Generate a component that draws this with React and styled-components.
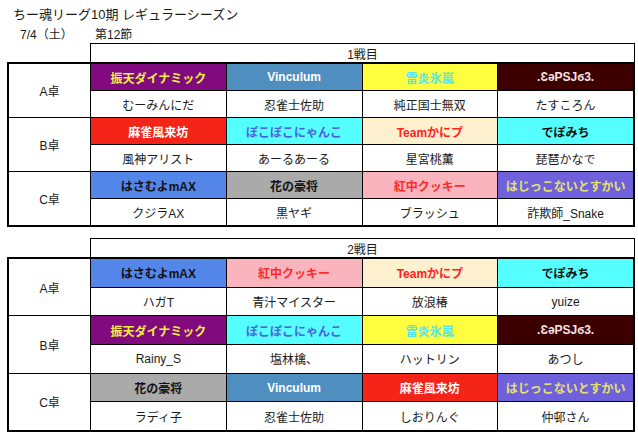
import React from "react";
import styled, { createGlobalStyle } from "styled-components";

const Global = createGlobalStyle`
  html, body { margin: 0; padding: 0; background: #fff; }
  body { font-family: "Liberation Sans", "Noto Sans CJK JP", sans-serif; color: #1a1a1a; }
`;

const Page = styled.div`
  width: 638px;
  height: 440px;
  box-sizing: border-box;
  padding: 6px 3px 0 7px;
  display: flex;
  flex-direction: column;
`;

const Title = styled.div`
  font-size: 13px;
  line-height: 18px;
  padding-left: 6px;
  white-space: nowrap;
`;

const SubRow = styled.div`
  display: flex;
  font-size: 12px;
  line-height: 16px;
  margin-top: 3px;
  padding-left: 13px;
`;

const DateText = styled.span`
  width: 75px;
  white-space: nowrap;
`;

const RoundTable = styled.div`
  display: flex;
  flex-direction: column;
  margin-top: ${(p) => p.$gap}px;
`;

const RoundHeader = styled.div`
  margin-left: 83px;
  height: ${(p) => p.$h}px;
  border: 1px solid #000;
  border-bottom: none;
  display: flex;
  align-items: center;
  justify-content: center;
  font-size: 12px;
`;

const Grid = styled.div`
  display: grid;
  grid-template-columns: 81px repeat(4, 1fr);
  grid-auto-rows: ${(p) => p.$rowH}px;
  gap: 1px;
  background: #000;
  border: 2px solid #000;
`;

const Cell = styled.div`
  display: flex;
  align-items: center;
  justify-content: center;
  background: ${(p) => p.$bg || "#fff"};
  color: ${(p) => p.$fg || "#1a1a1a"};
  font-size: 12px;
  font-weight: ${(p) => (p.$bold ? 700 : 400)};
  white-space: nowrap;
  overflow: hidden;
`;

const Label = styled(Cell)`
  grid-row: span 2;
`;

const TEAMS = {
  振天ダイナミック: { bg: "#800a7e", fg: "#f2ee44" },
  Vinculum: { bg: "#4f8fc0", fg: "#ffffff" },
  雷炎氷嵐: { bg: "#ffff40", fg: "#55e4ee" },
  PSJ: { bg: "#3d0000", fg: "#f4e4e4", name: ".ƐəPSJϭ3." },
  麻雀風来坊: { bg: "#f52418", fg: "#ffffff" },
  ぽこぽこにゃんこ: { bg: "#55ffff", fg: "#4c62dc" },
  Teamかにプ: { bg: "#fdf0cf", fg: "#ff2020" },
  でぽみち: { bg: "#55ffff", fg: "#111111" },
  はさむよmAX: { bg: "#5486ea", fg: "#111111" },
  花の豪将: { bg: "#aaaaaa", fg: "#111111" },
  紅中クッキー: { bg: "#f9b4be", fg: "#ff2b2b" },
  はじっこないとすかい: { bg: "#6f60dc", fg: "#e4e070" },
};

const ROUNDS = [
  {
    title: "1戦目",
    rowH: 26,
    headH: 18,
    gap: 0,
    tables: [
      ["A卓", [["振天ダイナミック", "むーみんにだ"], ["Vinculum", "忍雀士佐助"], ["雷炎氷嵐", "純正国士無双"], ["PSJ", "たすころん"]]],
      ["B卓", [["麻雀風来坊", "風神アリスト"], ["ぽこぽこにゃんこ", "あーるあーる"], ["Teamかにプ", "星宮桃薫"], ["でぽみち", "琵琶かなで"]]],
      ["C卓", [["はさむよmAX", "クジラAX"], ["花の豪将", "黒ヤギ"], ["紅中クッキー", "ブラッシュ"], ["はじっこないとすかい", "詐欺師_Snake"]]],
    ],
  },
  {
    title: "2戦目",
    rowH: 27.7,
    headH: 18,
    gap: 11,
    tables: [
      ["A卓", [["はさむよmAX", "ハガT"], ["紅中クッキー", "青汁マイスター"], ["Teamかにプ", "放浪椿"], ["でぽみち", "yuize"]]],
      ["B卓", [["振天ダイナミック", "Rainy_S"], ["ぽこぽこにゃんこ", "塩林檎、"], ["雷炎氷嵐", "ハットリン"], ["PSJ", "あつし"]]],
      ["C卓", [["花の豪将", "ラディ子"], ["Vinculum", "忍雀士佐助"], ["麻雀風来坊", "しおりんぐ"], ["はじっこないとすかい", "仲邨さん"]]],
    ],
  },
];

function Round({ round }) {
  return (
    <RoundTable $gap={round.gap}>
      <RoundHeader $h={round.headH}>{round.title}</RoundHeader>
      <Grid $rowH={round.rowH}>
        {round.tables.map(([label, seats]) => (
          <React.Fragment key={label}>
            <Label>{label}</Label>
            {seats.map(([team]) => {
              const t = TEAMS[team];
              return (
                <Cell key={label + team} $bg={t.bg} $fg={t.fg} $bold>
                  {t.name || team}
                </Cell>
              );
            })}
            {seats.map(([team, player]) => (
              <Cell key={label + team + "p"}>{player}</Cell>
            ))}
          </React.Fragment>
        ))}
      </Grid>
    </RoundTable>
  );
}

export default function App() {
  return (
    <>
      <Global />
      <Page>
        <Title>ちー魂リーグ10期 レギュラーシーズン</Title>
        <SubRow>
          <DateText>7/4（土）</DateText>
          <span>第12節</span>
        </SubRow>
        {ROUNDS.map((r) => (
          <Round key={r.title} round={r} />
        ))}
      </Page>
    </>
  );
}
